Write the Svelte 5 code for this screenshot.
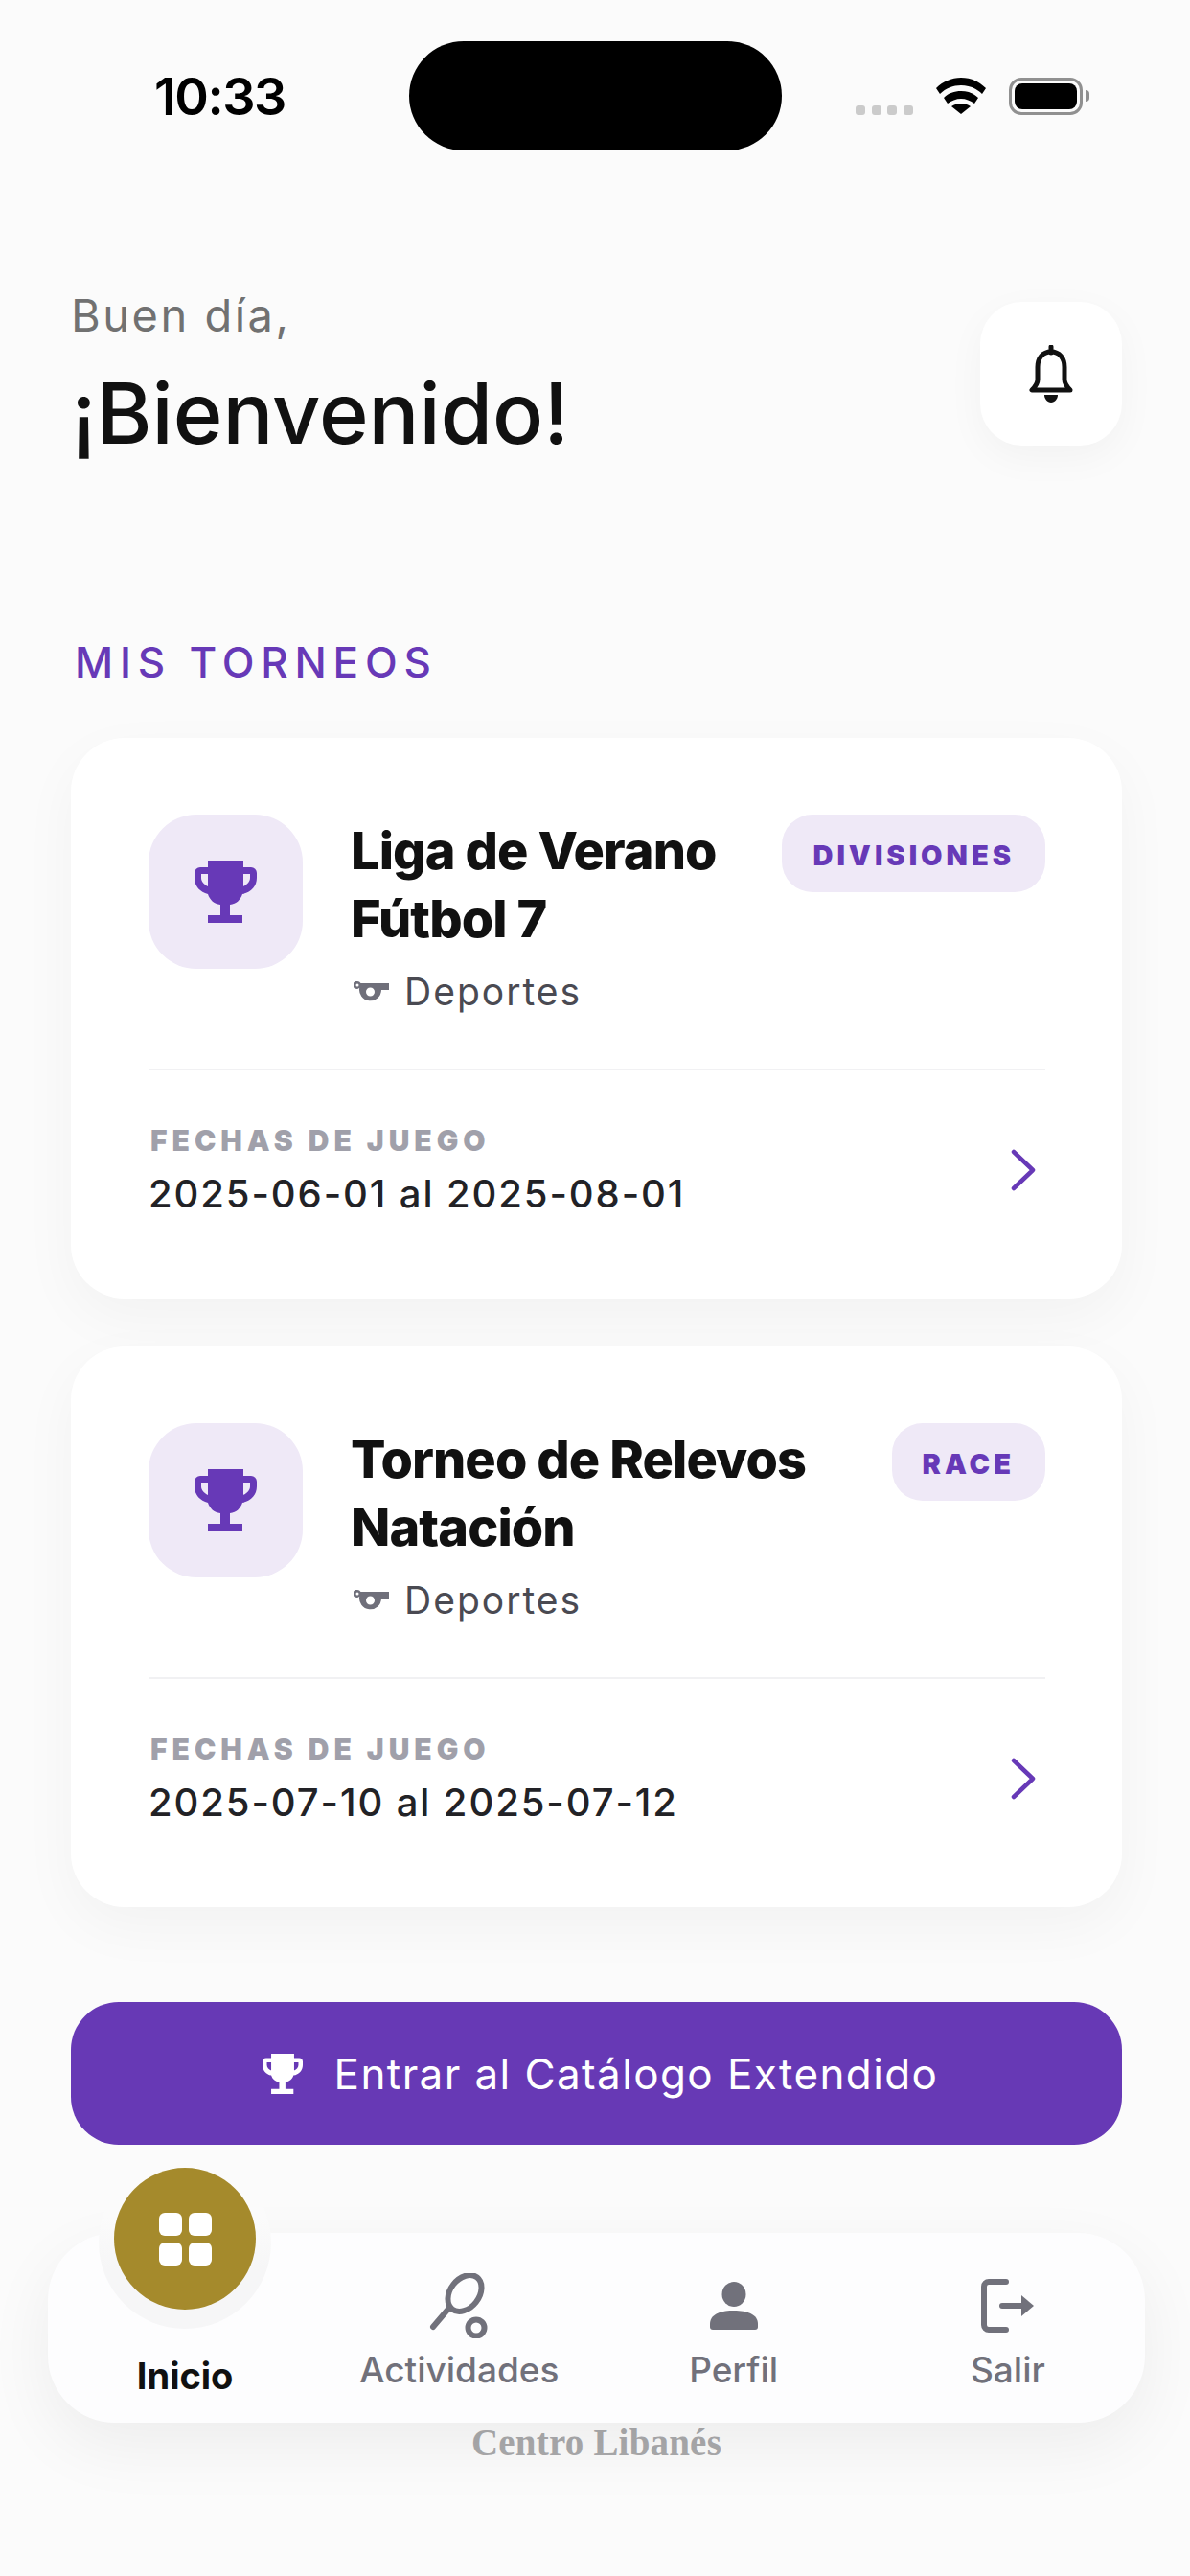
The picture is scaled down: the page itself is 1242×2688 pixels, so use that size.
<script>
	const torneos = [
		{ id: 1, lines: ['Liga de Verano', 'Fútbol 7'], tag: 'DIVISIONES', fechas: '2025-06-01 al 2025-08-01' },
		{ id: 2, lines: ['Torneo de Relevos', 'Natación'], tag: 'RACE', fechas: '2025-07-10 al 2025-07-12' }
	];
	const trophy = 'M14 0h37v7h8a6 6 0 0 1 6 6v5c0 9-6 15-15 17-2 6-6 10-13 11v11h13v8H14v-8h13V46c-7-1-11-5-13-11C6 33 0 27 0 18v-5a6 6 0 0 1 6-6h8z M7 14v4c0 4 3 7 7 9V14z M58 14h-7v13c4-2 7-5 7-9z';
</script>

<div class="screen">
	<div class="status">
		<span class="time">10:33</span>
		<div class="island"></div>
		<div class="status-right">
			<div class="dots"><i></i><i></i><i></i><i></i></div>
			<svg class="wifi" viewBox="0 0 52 38" width="52" height="38">
				<path d="M26 0C16 0 7 4 0 11l4 6C10 11 18 8 26 8s16 3 22 9l4-6C45 4 36 0 26 0z"/>
				<path d="M26 14c-7 0-13 2-18 7l4 6c4-3 9-5 14-5s10 2 14 5l4-6c-5-5-11-7-18-7z"/>
				<path d="M26 27c-4 0-7 1-10 3l10 8 10-8c-3-2-6-3-10-3z"/>
			</svg>
			<div class="battery"><div class="level"></div></div>
			<div class="nub"></div>
		</div>
	</div>

	<main class="page">
		<header class="head">
			<div>
				<p class="hello">Buen día,</p>
				<h1>¡Bienvenido!</h1>
			</div>
			<button class="bell" aria-label="Notificaciones">
				<svg viewBox="0 0 46 60" width="46" height="60">
					<path d="M23 2v6" stroke="#111" stroke-width="5" stroke-linecap="round" fill="none"/>
					<path d="M23 7c-9 0-14 7-14 16v13c0 4-2 7-6 11h40c-4-4-6-7-6-11V23c0-9-5-16-14-16z" fill="none" stroke="#111" stroke-width="5" stroke-linejoin="round"/>
					<path d="M16 52h14c0 4-3 8-7 8s-7-4-7-8z" fill="#111"/>
				</svg>
			</button>
		</header>

		<h2 class="section">MIS TORNEOS</h2>

		{#each torneos as t (t.id)}
			<article class="card">
				<div class="card-top">
					<div class="cup">
						<svg viewBox="0 0 65 65" width="65" height="65"><path fill="#6739b7" fill-rule="evenodd" d={trophy}/></svg>
					</div>
					<div class="info">
						<h3>{t.lines[0]}<br>{t.lines[1]}</h3>
						<div class="kind">
							<svg viewBox="0 0 37 22" width="37" height="22">
								<path fill="#6f6f7a" fill-rule="evenodd" d="M4 0a4 4 0 0 1 3.500 2H37v7H29a11.500 11.500 0 1 1-22.800-2.300A4 4 0 1 1 4 0z M4 2.500a1.500 1.500 0 1 0 0 3 1.500 1.500 0 0 0 0-3z M17.500 6.500a4.500 4.500 0 1 0 0 9 4.500 4.500 0 0 0 0-9z"/>
							</svg>
							<span>Deportes</span>
						</div>
					</div>
					<span class="tag">{t.tag}</span>
				</div>
				<div class="card-bottom">
					<div>
						<div class="label">FECHAS DE JUEGO</div>
						<div class="dates">{t.fechas}</div>
					</div>
					<svg class="chev" viewBox="0 0 26 44" width="26" height="44">
						<path d="M3 3l20 19L3 41" fill="none" stroke="#6739b7" stroke-width="4.500" stroke-linecap="round" stroke-linejoin="round"/>
					</svg>
				</div>
			</article>
		{/each}

		<button class="catalog">
			<svg viewBox="0 0 65 65" width="42" height="42"><path fill="#fff" fill-rule="evenodd" d={trophy}/></svg>
			<span>Entrar al Catálogo Extendido</span>
		</button>

		<nav class="tabs">
			<div class="tab home">
				<div class="fab-ring">
					<div class="fab">
						<div class="grid"><i></i><i></i><i></i><i></i></div>
					</div>
				</div>
				<span>Inicio</span>
			</div>
			<div class="tab">
				<svg viewBox="0 0 62 68" width="62" height="68">
					<g fill="none" stroke="#71717b" stroke-width="6" stroke-linecap="round">
						<ellipse cx="37" cy="21" rx="15" ry="21" transform="rotate(38 37 21)"/>
						<path d="M21 36L4 56"/>
						<circle cx="49" cy="57" r="8.500"/>
					</g>
				</svg>
				<span>Actividades</span>
			</div>
			<div class="tab">
				<svg viewBox="0 -9 50 68" width="50" height="68">
					<ellipse cx="25" cy="13" rx="12.500" ry="13" fill="#71717b"/>
					<path d="M0 44c0-10 11-14 25-14s25 4 25 14v3a3 3 0 0 1-3 3H3a3 3 0 0 1-3-3z" fill="#71717b"/>
				</svg>
				<span>Perfil</span>
			</div>
			<div class="tab">
				<svg viewBox="0 -6 56 68" width="56" height="68">
					<path d="M26 3H8a5 5 0 0 0-5 5v40a5 5 0 0 0 5 5h18" fill="none" stroke="#71717b" stroke-width="6" stroke-linecap="round"/>
					<path d="M22 28h24" stroke="#71717b" stroke-width="6" stroke-linecap="round"/>
					<path d="M42 17l13 11-13 11z" fill="#71717b"/>
				</svg>
				<span>Salir</span>
			</div>
		</nav>
		<div class="brand">Centro Libanés</div>
	</main>
</div>

<style>
	:global(body) {
		background: #fbfbfb;
	}

	.screen {
		width: 1242px;
		height: 2688px;
		overflow: hidden;
		background: #fbfbfb;
		font-family: Inter, "Noto Sans", sans-serif;
	}

	.status {
		display: flex;
		align-items: center;
		padding-top: 43px;
		height: 114px;
	}
	.time {
		width: 266px;
		padding-left: 161px;
		font-size: 54px;
		font-weight: 600;
		color: #000;
		letter-spacing: -1.500px;
	}
	.island {
		width: 389px;
		height: 114px;
		background: #000;
		border-radius: 57px;
	}
	.status-right {
		display: flex;
		align-items: center;
		margin-left: 77px;
	}
	.dots {
		display: flex;
		gap: 6.500px;
		margin-top: 30px;
		margin-right: 24px;
	}
	.dots i {
		width: 10px;
		height: 10px;
		border-radius: 3px;
		background: #cbcbcb;
	}
	.wifi {
		margin-right: 24px;
	}
	.battery {
		box-sizing: border-box;
		width: 77px;
		height: 39px;
		border: 3px solid #909090;
		border-radius: 13px;
		padding: 3px;
	}
	.level {
		height: 100%;
		background: #000;
		border-radius: 8px;
	}
	.nub {
		width: 4px;
		height: 12px;
		margin-left: 3px;
		background: #909090;
		border-radius: 0 4px 4px 0;
	}

	.page {
		padding: 0 71px 0 74px;
	}
	.head {
		display: flex;
		justify-content: space-between;
		align-items: flex-start;
		padding-top: 144px;
	}
	.hello {
		margin: 0;
		font-size: 47px;
		line-height: 56px;
		color: #717171;
		letter-spacing: 2.500px;
	}
	h1 {
		margin: 24px 0 0;
		font-size: 88px;
		line-height: 100px;
		font-weight: 500;
		letter-spacing: 0;
		color: #111;
	}
	.bell {
		width: 148px;
		height: 150px;
		margin-top: 14px;
		display: flex;
		align-items: center;
		justify-content: center;
		border: 0;
		padding: 0;
		background: #fff;
		border-radius: 44px;
		box-shadow: 0 12px 40px rgba(0, 0, 0, 0.04);
	}

	.section {
		margin: 185px 0 0 4px;
		font-size: 44px;
		line-height: 50px;
		font-weight: 500;
		letter-spacing: 6.800px;
		color: #6739b7;
	}

	.card {
		height: 585px;
		box-sizing: border-box;
		margin-top: 50px;
		padding: 80px 80px 0 81px;
		background: #fff;
		border-radius: 56px;
		box-shadow: 0 20px 60px rgba(0, 0, 0, 0.04);
	}
	.section + .card {
		margin-top: 54px;
	}
	.card-top {
		display: flex;
		align-items: flex-start;
		height: 265px;
		border-bottom: 2px solid #f1f1f3;
	}
	.cup {
		width: 161px;
		height: 161px;
		flex: none;
		display: flex;
		align-items: center;
		justify-content: center;
		background: #efe9f7;
		border-radius: 50px;
	}
	.info {
		flex: 1;
		margin-left: 50px;
		padding-top: 2px;
	}
	h3 {
		margin: 0;
		font-size: 54px;
		line-height: 71px;
		font-weight: 800;
		letter-spacing: -0.900px;
		color: #111;
	}
	.kind {
		display: flex;
		align-items: center;
		gap: 16px;
		margin-top: 17px;
		margin-left: 3px;
		font-size: 39px;
		line-height: 48px;
		color: #4a4a52;
		letter-spacing: 2px;
	}
	.tag {
		height: 81px;
		box-sizing: border-box;
		padding: 4px 32px 0;
		display: flex;
		align-items: center;
		background: #efe9f7;
		border-radius: 32px;
		font-size: 29px;
		font-weight: 900;
		letter-spacing: 4px;
		color: #6739b7;
	}
	.card-bottom {
		display: flex;
		align-items: center;
		justify-content: space-between;
		padding-top: 55px;
		padding-right: 10px;
	}
	.label {
		font-size: 30px;
		line-height: 36px;
		font-weight: 900;
		letter-spacing: 5px;
		color: #a0a0aa;
		margin-left: 2px;
	}
	.dates {
		margin-top: 14px;
		font-size: 40px;
		line-height: 48px;
		font-weight: 500;
		letter-spacing: 1.900px;
		color: #222226;
	}

	.catalog {
		width: 100%;
		height: 149px;
		margin-top: 99px;
		padding: 0 0 0 8px;
		display: flex;
		align-items: center;
		justify-content: center;
		gap: 33px;
		border: 0;
		border-radius: 50px;
		background: #6739b5;
		color: #fff;
		font-family: inherit;
		font-size: 44px;
		letter-spacing: 1.400px;
	}

	.tabs {
		display: flex;
		position: relative;
		width: 1145px;
		height: 198px;
		margin: 92px 0 0 -24px;
		background: #fdfdfe;
		border-radius: 70px;
		box-shadow: 0 24px 70px rgba(0, 0, 0, 0.06);
	}
	.tab {
		flex: 1;
		display: flex;
		flex-direction: column;
		align-items: center;
		justify-content: flex-end;
		padding-bottom: 32px;
		font-size: 37px;
		line-height: 46px;
		font-weight: 500;
		color: #71717b;
		height: 198px;
		box-sizing: border-box;
	}
	.tab svg {
		margin-bottom: 10px;
	}
	.home {
		position: relative;
		padding-bottom: 26px;
		font-weight: 700;
		font-size: 38px;
		color: #111;
	}
	.fab-ring {
		position: absolute;
		left: 53px;
		top: -80px;
		width: 180px;
		height: 180px;
		box-sizing: border-box;
		padding: 12px 16px 0;
		border-radius: 50%;
		background: linear-gradient(#fbfbfb 35%, #f6f6f7 65%);
	}
	.fab {
		width: 148px;
		height: 148px;
		display: flex;
		align-items: center;
		justify-content: center;
		border-radius: 50%;
		background: #a58a2c;
	}
	.grid {
		display: grid;
		grid-template-columns: 24px 24px;
		grid-auto-rows: 24px;
		gap: 7px;
	}
	.grid i {
		background: #fff;
		border-radius: 6px;
	}

	.brand {
		margin-top: -2px;
		text-align: center;
		font-family: "Liberation Serif", serif;
		font-weight: 700;
		font-size: 39px;
		line-height: 46px;
		letter-spacing: 0.200px;
		color: #a9a9ab;
	}
</style>
